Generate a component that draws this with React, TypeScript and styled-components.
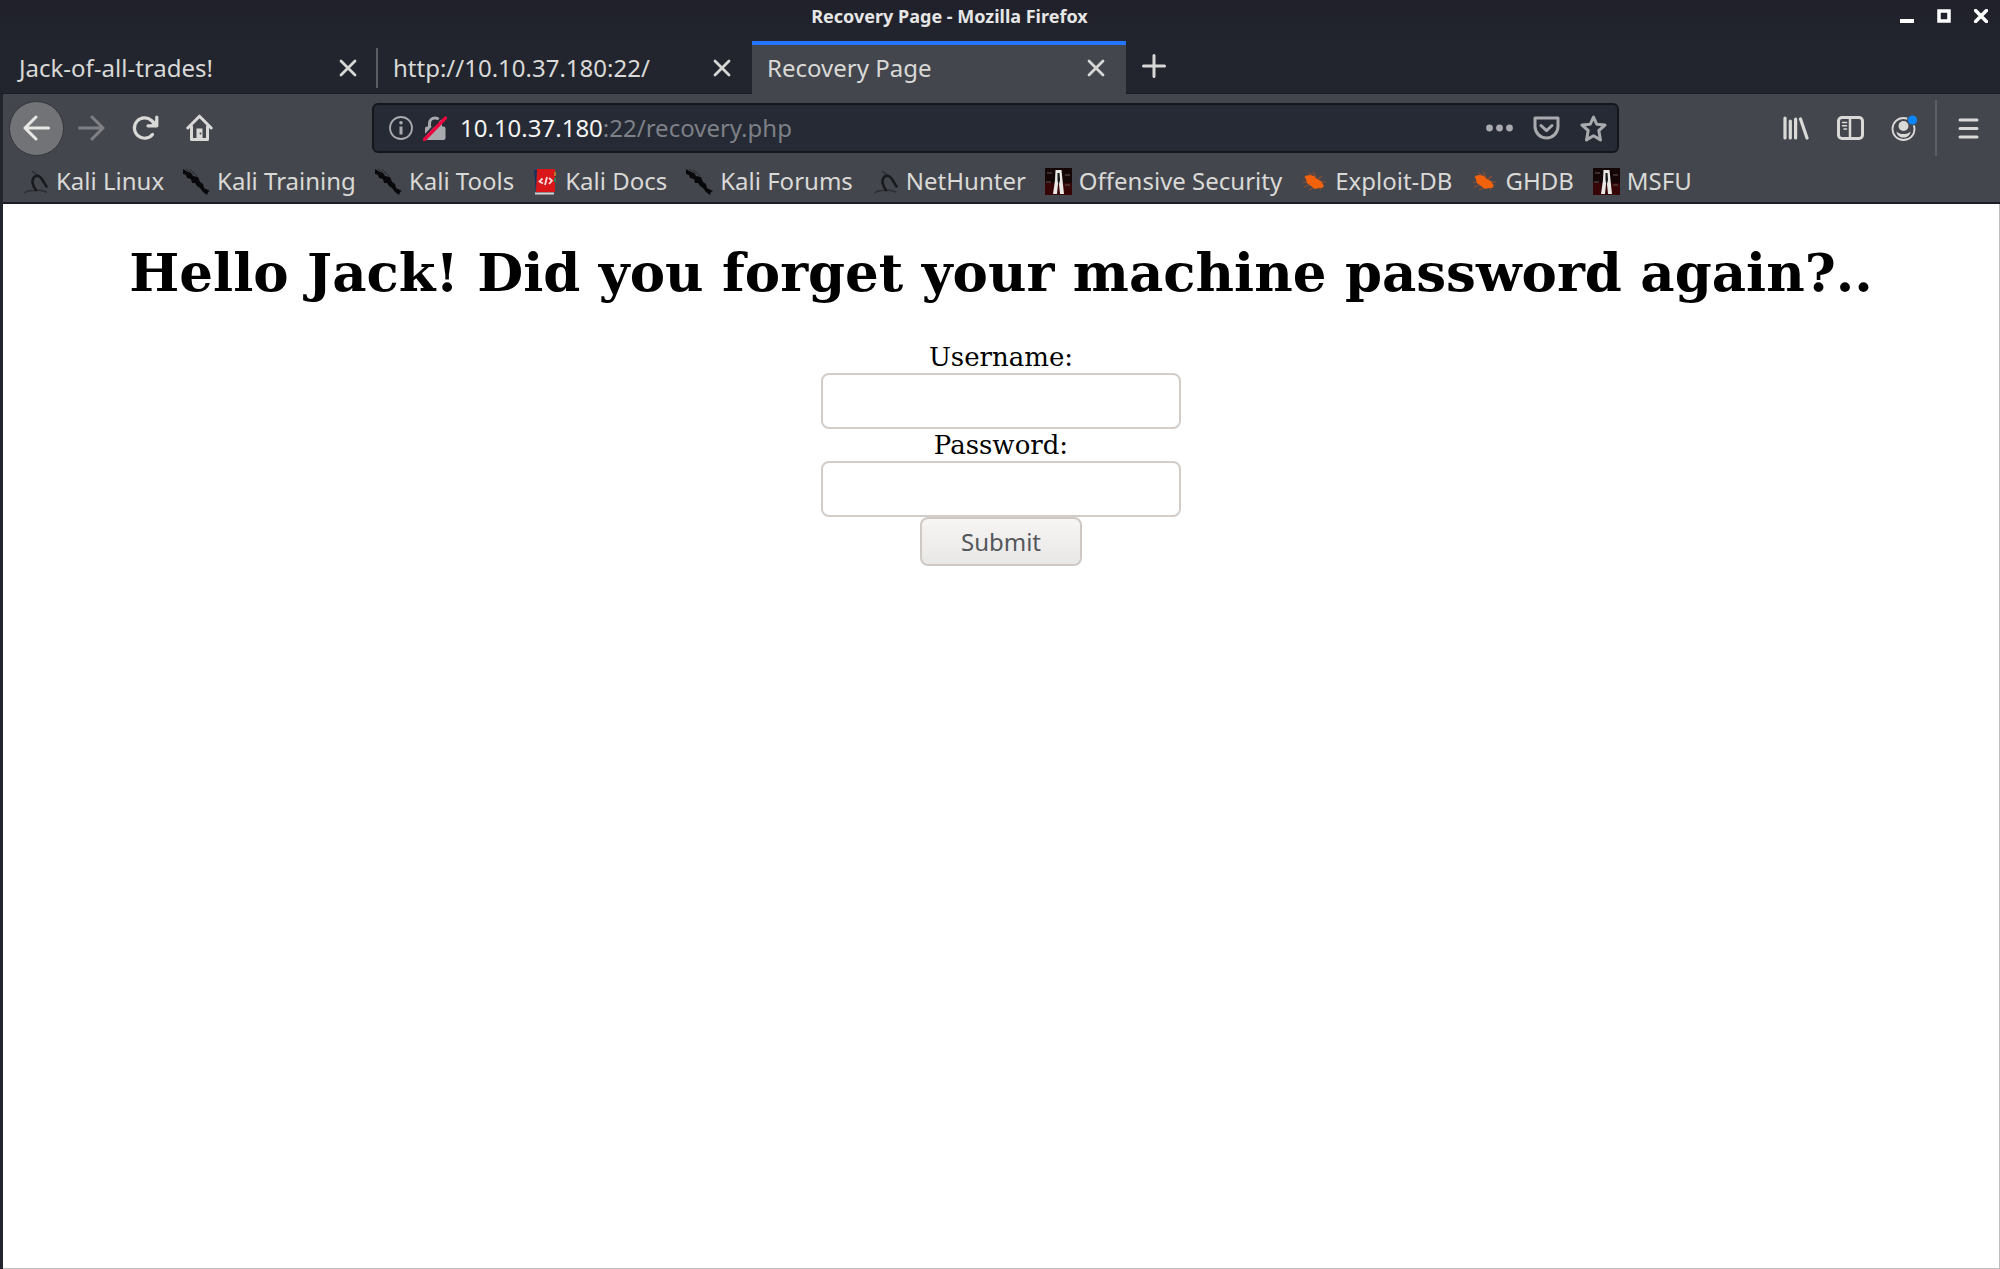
import React from 'react';
import styled, { createGlobalStyle, css } from 'styled-components';

const ui = '"Noto Sans", "Open Sans", sans-serif';
const serif = '"DejaVu Serif", serif';

const GlobalStyle = createGlobalStyle`
  *, *::before, *::after { box-sizing: border-box; }
  body { margin: 0; background: #22252e; }
  svg { display: block; flex: none; }
`;

const Window = styled.div`
  min-height: 100vh;
  display: flex;
  flex-direction: column;
  background: #22252e;
  font-family: ${ui};
`;

const iconButton = css`
  display: flex;
  align-items: center;
  justify-content: center;
  flex: none;
  margin: 0;
  padding: 0;
  border: 0;
  background: none;
  color: #d7d7d5;
`;

const TitleBar = styled.header`
  display: grid;
  grid-template-columns: 1fr auto 1fr;
  align-items: center;
  height: 41px;
  padding: 0 9px 9px 0;
  background: linear-gradient(#1f2029, #23252e);
`;

const WindowTitle = styled.div`
  grid-column: 2;
  margin-right: 92px;
  color: #e6e6e6;
  font-size: 18px;
  font-weight: 700;
  line-height: 24px;
`;

const WindowControls = styled.div`
  display: flex;
  justify-content: flex-end;
  gap: 17px;
`;

const WindowButton = styled.button`
  ${iconButton}
  width: 20px;
  height: 20px;
  color: #fff;
`;

const TabStrip = styled.nav`
  display: flex;
  height: 53px;
  padding-left: 4px;
  box-shadow: inset 0 -1px #191b22;
`;

const Tab = styled.div<{ $active?: boolean; $divider?: boolean }>`
  display: flex;
  align-items: center;
  justify-content: space-between;
  width: 374px;
  padding: 0 20px 0 15px;
  color: #d9d9d7;
  ${(p) =>
    p.$divider &&
    css`
      background: linear-gradient(#5c5d63, #5c5d63) right center / 2px 40px no-repeat;
    `}
  ${(p) =>
    p.$active &&
    css`
      background: #44464d;
      border-top: 4px solid #2374ff;
      padding-bottom: 4px;
    `}
`;

const TabLabel = styled.a`
  color: inherit;
  font-size: 24px;
  line-height: 32px;
  text-decoration: none;
  white-space: nowrap;
`;

const TabButton = styled.button`
  ${iconButton}
  width: 20px;
  height: 20px;
`;

const NewTab = styled.button`
  ${iconButton}
  width: 56px;
  height: 50px;
`;

const Chrome = styled.div`
  margin-left: 3px;
  background: #44464d;
  border-bottom: 2px solid #1c1d24;
`;

const NavBar = styled.div`
  display: flex;
  align-items: center;
  height: 68px;
  padding: 0 5px 0 6px;
`;

const BackButton = styled.button`
  ${iconButton}
  width: 55px;
  height: 55px;
  border: 1px solid #35363c;
  border-radius: 50%;
  background: #727377;
  color: #e8e8e6;
`;

const NavButton = styled.button<{ $dim?: boolean }>`
  ${iconButton}
  width: 54px;
  height: 54px;
  color: ${(p) => (p.$dim ? '#7f8085' : '#d9d9d7')};
`;

const AddressBar = styled.div`
  display: flex;
  align-items: center;
  flex: 1;
  height: 50px;
  margin: 0 150px 0 146px;
  padding: 0 0 0 10px;
  border: 2px solid #14161b;
  border-radius: 6px;
  background: #262a34;
  color: #a9aaad;
`;

const AddressButton = styled.button<{ $wide?: boolean }>`
  ${iconButton}
  width: ${(p) => (p.$wide ? 47 : 34)}px;
  color: #a9aaad;
`;

const Address = styled.a`
  flex: 1;
  margin-left: 8px;
  color: #7d8087;
  font-size: 24px;
  line-height: 32px;
  text-decoration: none;
`;

const Host = styled.span`
  color: #f4f4f2;
`;

const MenuDivider = styled.span`
  width: 2px;
  height: 56px;
  margin: 0 4px;
  background: #5e5f65;
`;

const Bookmarks = styled.nav`
  display: flex;
  align-items: center;
  height: 40px;
  gap: 19px;
  padding: 0 19px 2px;
`;

const Bookmark = styled.a`
  display: flex;
  align-items: center;
  gap: 7px;
  color: #d9d9d7;
  font-size: 24px;
  line-height: 32px;
  text-decoration: none;
  white-space: nowrap;
`;

const Page = styled.main`
  flex: 1;
  margin-left: 3px;
  padding: 0 12px;
  border: solid #bdbdbd;
  border-width: 0 1px 1px 0;
  background: #fff;
  color: #000;
  font-family: ${serif};
  text-align: center;
`;

const Heading = styled.h1`
  margin: 36px 0;
  font-size: 53px;
  font-weight: 700;
  line-height: 65px;
`;

const Form = styled.form`
  display: flex;
  flex-direction: column;
  align-items: center;
`;

const Label = styled.label`
  font-size: 26px;
  line-height: 32px;
`;

const Field = styled.input`
  width: 360px;
  height: 56px;
  padding: 0 12px;
  border: 2px solid #d3cdc9;
  border-radius: 8px;
  background: #fff;
  font-family: ${ui};
  font-size: 24px;
`;

const Submit = styled.button`
  width: 162px;
  height: 49px;
  padding: 0;
  border: 2px solid #cfc9c5;
  border-radius: 8px;
  background: linear-gradient(#f6f5f4, #e9e8e6);
  color: #53575b;
  font-family: ${ui};
  font-size: 24px;
  line-height: 32px;
`;

const Close = ({ size = 18, weight = 2.8 }: { size?: number; weight?: number }) => (
  <svg width={size} height={size} viewBox="0 0 18 18" stroke="currentColor" strokeWidth={weight} strokeLinecap="round">
    <path d="M2 2l14 14M16 2L2 16" />
  </svg>
);

const Arrow = ({ flip }: { flip?: boolean }) => (
  <svg width="27" height="26" viewBox="0 0 27 26" fill="none" stroke="currentColor" strokeWidth="3" strokeLinecap="round" strokeLinejoin="round">
    {flip ? <path d="M1.5 13h23M14 2l11 11-11 11" /> : <path d="M25.5 13h-23M13 2L2 13l11 11" />}
  </svg>
);

const Reload = () => (
  <svg width="27" height="26" viewBox="0 0 27 26" fill="none" stroke="currentColor" strokeWidth="3.2" strokeLinecap="round">
    <path d="M20.500 19.500A10.200 10.200 0 1 1 19.500 5.500L22 8" />
    <path d="M24.800 2v8.800M24.800 10.800H16" />
    <path d="M24.500 4v6.500h-6.500z" fill="currentColor" stroke="none" />
  </svg>
);

const Home = () => (
  <svg width="27" height="28" viewBox="0 0 27 28" fill="none" stroke="currentColor" strokeWidth="3" strokeLinecap="round" strokeLinejoin="round">
    <path d="M1.8 14L13.500 2.200 25.200 14" />
    <path d="M5.500 12.500v13h16v-13" />
    <path d="M10.500 14.500h6v10h-6z" fill="currentColor" stroke="none" />
    <circle cx="14.500" cy="19.500" r="1" fill="#44464d" stroke="none" />
  </svg>
);

const Info = () => (
  <svg width="24" height="24" viewBox="0 0 24 24" fill="none" stroke="currentColor" strokeWidth="1.800">
    <circle cx="12" cy="12" r="11" />
    <circle cx="12" cy="6.700" r="1.800" fill="currentColor" stroke="none" />
    <path d="M12 10.500v8" strokeWidth="3" />
  </svg>
);

const BrokenLock = () => (
  <svg width="24" height="25" viewBox="0 0 24 25" fill="none">
    <path d="M6.500 12V7.500a5.500 5.500 0 0 1 11 0V12" stroke="currentColor" strokeWidth="3" />
    <rect x="2" y="10.500" width="20.500" height="13.500" rx="2" fill="currentColor" />
    <path d="M-1 22.500L21-1" stroke="#262a34" strokeWidth="2" />
    <path d="M1.500 23.500L22.500 2" stroke="#e9083f" strokeWidth="3.400" strokeLinecap="round" />
  </svg>
);

const Dots = () => (
  <svg width="27" height="8" viewBox="0 0 27 8" fill="currentColor">
    <circle cx="3.500" cy="4" r="3.400" />
    <circle cx="13.500" cy="4" r="3.400" />
    <circle cx="23.500" cy="4" r="3.400" />
  </svg>
);

const Pocket = () => (
  <svg width="27" height="24" viewBox="0 0 27 24" fill="none" stroke="currentColor" strokeWidth="3" strokeLinecap="round" strokeLinejoin="round">
    <path d="M2 2h23v8.500a11.500 11.500 0 0 1-23 0z" />
    <path d="M8 9.500l5.500 5.200L19 9.500" />
  </svg>
);

const Star = () => (
  <svg width="27" height="27" viewBox="0 0 27 27" fill="none" stroke="currentColor" strokeWidth="3" strokeLinejoin="round">
    <path d="M13.500 2l3.200 7.200 8.300.9-6.200 5.400 1.700 9.400-7-4.200-7 4.200 1.700-9.400L2 10.100l8.300-.9z" />
  </svg>
);

const Library = () => (
  <svg width="26" height="24" viewBox="0 0 26 24" fill="none" stroke="currentColor" strokeWidth="3.200" strokeLinecap="round">
    <path d="M2 2v20M7.300 5v17M12.600 3v19M17.500 3l6.500 19" />
  </svg>
);

const Sidebar = () => (
  <svg width="27" height="24" viewBox="0 0 27 24" fill="none" stroke="currentColor" strokeLinecap="round">
    <rect x="1.500" y="1.500" width="24" height="21" rx="3.500" strokeWidth="3" />
    <path d="M13 2v20" strokeWidth="2.500" />
    <path d="M5.500 6.500h4M5.500 9.800h4M7 13h2.500" strokeWidth="1.600" />
  </svg>
);

const Account = () => (
  <svg width="27" height="27" viewBox="0 0 27 27" fill="none">
    <circle cx="12.500" cy="14" r="11" stroke="currentColor" strokeWidth="1.800" />
    <circle cx="12.500" cy="11" r="5" fill="currentColor" />
    <path d="M5.500 16.500c2 2 4 2.500 7 2.500s5-.5 7-2.500c-.5 4-3.500 6-7 6s-6.500-2-7-6z" fill="currentColor" />
    <circle cx="21.500" cy="5" r="5.500" fill="#44464d" />
    <circle cx="21.500" cy="5" r="4.600" fill="#0a84ff" />
  </svg>
);

const Hamburger = () => (
  <svg width="21" height="21" viewBox="0 0 21 21" stroke="currentColor" strokeWidth="3" strokeLinecap="round">
    <path d="M2 2h17M2 10.500h17M2 19h17" />
  </svg>
);

const Kali = () => (
  <svg width="27" height="27" viewBox="0 0 27 27" fill="none" strokeLinecap="round">
    <path d="M3 24.500c4-3 8-1.500 12-2s6 0 9 1.500" stroke="#2b2d32" strokeWidth="1.500" />
    <path d="M10.500 3.500l4 3" stroke="#2b2d32" strokeWidth="1.500" />
    <path d="M14 22c-3-4-5-8-2.500-12 1-2 3.500-3 6-1.500 3 2 4 6 7 10" stroke="#191a1d" strokeWidth="2.600" />
  </svg>
);

const Dragon = () => (
  <svg width="27" height="27" viewBox="0 0 27 27" fill="#08080a">
    <path d="M0 1l5 3 3 1 2 3 5 1 2 5 3 2 1 4 6 3-2 1-1 3-4-3-3-4-3-2-2-3-3 0-1-4-4-1-1-3-3-1z" />
    <path d="M7 1l7 7M3 1l7 5" stroke="#2b2c30" strokeWidth="1" />
  </svg>
);

const Docs = () => (
  <svg width="25" height="27" viewBox="-1 0 25 27" fill="none">
    <path d="M0 2h5v22l-3 1z" fill="#19305f" />
    <path d="M3 1h18v23H2z" fill="#d9171b" />
    <path d="M21 4v4" stroke="#b8772c" strokeWidth="2" />
    <path d="M21 10v4" stroke="#367b57" strokeWidth="2" />
    <path d="M1 25.500h19" stroke="#d8d2d0" strokeWidth="2" />
    <path d="M8.500 10.500l-3 3 3.500 2M15 10l3 2.500-3 3.500M13 9l-2 8" stroke="#f6dada" strokeWidth="1.800" />
  </svg>
);

const Offsec = () => (
  <svg width="27" height="27" viewBox="0 0 27 27" fill="none">
    <path d="M0 0h27v27H0z" fill="#140607" />
    <path d="M0 15h27v12H0z" fill="#350507" />
    <path d="M2 5h5M20 7h5M1 14h5M20 17h5" stroke="#4d3b3c" strokeWidth="1.500" />
    <path d="M10.500 2h6l1 10 1.500 14h-4l-1-10h-1l-1 10H8l2-14z" fill="#ebe9e6" />
    <path d="M12.500 5h2l.5 7-1.500 6-1-6z" fill="#151517" />
  </svg>
);

const Bug = () => (
  <svg width="27" height="27" viewBox="0 0 27 27" fill="none">
    <path d="M8 5l5 5M3 9l6 3M2 14l6 1M3 19l8-3M8 22l6-3M17 11l4-3M19 14l6 0M12 4l3 5M18 19l2 3" stroke="#8f4e30" strokeWidth="1.200" />
    <path d="M4 8l4-1 5 1 3 3 4 2 3 5-2 2-3 0-4 1-4-3-4-3z" fill="#f2610c" />
  </svg>
);

const bookmarks: { label: string; Icon: () => React.JSX.Element }[] = [
  { label: 'Kali Linux', Icon: Kali },
  { label: 'Kali Training', Icon: Dragon },
  { label: 'Kali Tools', Icon: Dragon },
  { label: 'Kali Docs', Icon: Docs },
  { label: 'Kali Forums', Icon: Dragon },
  { label: 'NetHunter', Icon: Kali },
  { label: 'Offensive Security', Icon: Offsec },
  { label: 'Exploit-DB', Icon: Bug },
  { label: 'GHDB', Icon: Bug },
  { label: 'MSFU', Icon: Offsec },
];

const tabs = [
  { label: 'Jack-of-all-trades!', divider: true },
  { label: 'http://10.10.37.180:22/' },
  { label: 'Recovery Page', active: true },
];

export default function App() {
  return (
    <Window>
      <GlobalStyle />
      <TitleBar>
        <WindowTitle>Recovery Page - Mozilla Firefox</WindowTitle>
        <WindowControls>
          <WindowButton aria-label="Minimize">
            <svg width="14" height="14" viewBox="0 0 14 14"><path d="M0 10h14v4H0z" fill="currentColor" /></svg>
          </WindowButton>
          <WindowButton aria-label="Maximize">
            <svg width="14" height="14" viewBox="0 0 14 14"><path d="M2 2h10v10H2z" fill="none" stroke="currentColor" strokeWidth="3.500" /></svg>
          </WindowButton>
          <WindowButton aria-label="Close window"><Close size={14} weight={4.5} /></WindowButton>
        </WindowControls>
      </TitleBar>
      <TabStrip aria-label="Tabs">
        {tabs.map((t) => (
          <Tab key={t.label} $active={t.active} $divider={t.divider}>
            <TabLabel href="#">{t.label}</TabLabel>
            <TabButton aria-label={`Close ${t.label}`}><Close /></TabButton>
          </Tab>
        ))}
        <NewTab aria-label="New tab">
          <svg width="24" height="24" viewBox="0 0 24 24" stroke="currentColor" strokeWidth="3" strokeLinecap="round"><path d="M12 1.500v21M1.500 12h21" /></svg>
        </NewTab>
      </TabStrip>
      <Chrome>
        <NavBar>
          <BackButton aria-label="Back"><Arrow /></BackButton>
          <NavButton aria-label="Forward" $dim><Arrow flip /></NavButton>
          <NavButton aria-label="Reload"><Reload /></NavButton>
          <NavButton aria-label="Home"><Home /></NavButton>
          <AddressBar>
            <AddressButton aria-label="Site information"><Info /></AddressButton>
            <AddressButton aria-label="Connection not secure"><BrokenLock /></AddressButton>
            <Address href="#"><Host>10.10.37.180</Host>:22/recovery.php</Address>
            <AddressButton aria-label="Page actions" $wide><Dots /></AddressButton>
            <AddressButton aria-label="Save to Pocket" $wide><Pocket /></AddressButton>
            <AddressButton aria-label="Bookmark this page" $wide><Star /></AddressButton>
          </AddressBar>
          <NavButton aria-label="Library"><Library /></NavButton>
          <NavButton aria-label="Sidebars"><Sidebar /></NavButton>
          <NavButton aria-label="Account"><Account /></NavButton>
          <MenuDivider />
          <NavButton aria-label="Menu"><Hamburger /></NavButton>
        </NavBar>
        <Bookmarks aria-label="Bookmarks">
          {bookmarks.map(({ label, Icon }) => (
            <Bookmark key={label} href="#"><Icon />{label}</Bookmark>
          ))}
        </Bookmarks>
      </Chrome>
      <Page>
        <Heading>Hello Jack! Did you forget your machine password again?..</Heading>
        <Form onSubmit={(e) => e.preventDefault()}>
          <Label htmlFor="username">Username:</Label>
          <Field id="username" type="text" />
          <Label htmlFor="password">Password:</Label>
          <Field id="password" type="password" />
          <Submit type="submit">Submit</Submit>
        </Form>
      </Page>
    </Window>
  );
}
